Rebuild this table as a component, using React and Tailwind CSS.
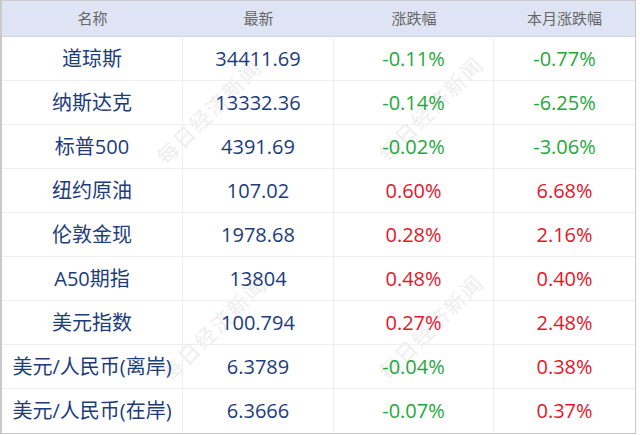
const rows = [
  { name: '道琼斯', last: '34411.69', chg: '-0.11%', month: '-0.77%' },
  { name: '纳斯达克', last: '13332.36', chg: '-0.14%', month: '-6.25%' },
  { name: '标普500', last: '4391.69', chg: '-0.02%', month: '-3.06%' },
  { name: '纽约原油', last: '107.02', chg: '0.60%', month: '6.68%' },
  { name: '伦敦金现', last: '1978.68', chg: '0.28%', month: '2.16%' },
  { name: 'A50期指', last: '13804', chg: '0.48%', month: '0.40%' },
  { name: '美元指数', last: '100.794', chg: '0.27%', month: '2.48%' },
  { name: '美元/人民币(离岸)', last: '6.3789', chg: '-0.04%', month: '0.38%' },
  { name: '美元/人民币(在岸)', last: '6.3666', chg: '-0.07%', month: '0.37%' },
];

const tone = (v) => (v.startsWith('-') ? 'text-[#1fa83c]' : 'text-[#e8142a]');

// faint diagonal watermark, sits under the table text
const marks = [
  'left-[140px] top-[96px]',
  'left-[362px] top-[93px]',
  'left-[145px] top-[313px]',
  'left-[362px] top-[311px]',
];

export default function App() {
  return (
    <div className="relative w-[640px] h-[435px] bg-white overflow-hidden font-['Open_Sans','Noto_Sans_CJK_SC',sans-serif]">
      {marks.map((m) => (
        <div
          key={m}
          className={`absolute ${m} -rotate-45 text-[21px] tracking-[2px] text-[#eeeeee] pointer-events-none select-none whitespace-nowrap font-['Noto_Sans_CJK_SC',serif]`}
        >
          每日经济新闻
        </div>
      ))}
      <div className="relative w-[636px] border-l-2 border-r border-t border-b border-[#c9c9c9]">
        <div className="grid grid-cols-[181px_151px_160px_1fr] h-[36px] bg-[#dee4f4] text-[15px] text-[#666] border-b border-[#cfd6e8]">
          <div className="flex items-center justify-center">名称</div>
          <div className="flex items-center justify-center">最新</div>
          <div className="flex items-center justify-center">涨跌幅</div>
          <div className="flex items-center justify-center">本月涨跌幅</div>
        </div>
        {rows.map((r, i) => (
          <div
            key={r.name}
            className={`grid grid-cols-[181px_151px_160px_1fr] h-[44px] text-[20px] ${i < rows.length - 1 ? 'border-b border-[#efefef]' : ''}`}
          >
            <div className="flex items-center justify-center text-[#1d3c7a] border-r border-[#efefef] whitespace-nowrap">{r.name}</div>
            <div className="flex items-center justify-center text-[#1d3c7a] border-r border-[#efefef]">{r.last}</div>
            <div className={`flex items-center justify-center border-r border-[#efefef] ${tone(r.chg)}`}>{r.chg}</div>
            <div className={`flex items-center justify-center ${tone(r.month)}`}>{r.month}</div>
          </div>
        ))}
      </div>
    </div>
  );
}
